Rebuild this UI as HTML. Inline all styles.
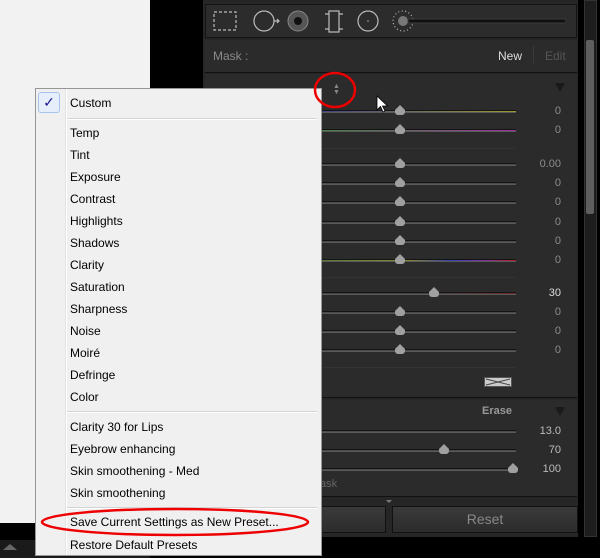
<!DOCTYPE html>
<html><head><style>
*{margin:0;padding:0;box-sizing:border-box}
body{width:600px;height:558px;background:#000;position:relative;overflow:hidden;font-family:"Liberation Sans",sans-serif}
.a{position:absolute}
.tr{position:absolute;left:300px;width:216px;height:3px;background:#4a4a4a;border-top:1px solid #141414;border-bottom:1px solid #5a5a5a}
.th{position:absolute;width:10px;height:10px;background:#a0a0a0;clip-path:polygon(50% 0,100% 50%,100% 100%,0 100%,0 50%);border-radius:3px}
.v{position:absolute;right:39px;font-size:11px;color:#8c8c8c;text-align:right}
.mi{position:absolute;left:70px;font-size:12px;color:#000}
.sep{position:absolute;left:67px;width:250px;height:2px;border-top:1px solid #d4d4d4;border-bottom:1px solid #fff}
</style></head><body>
<div class="a" style="left:0;top:0;width:150px;height:523px;background:#f2f2f2"></div>
<div class="a" style="left:0;top:540px;width:150px;height:18px;background:#1a1a1a"></div>
<div class="a" style="left:3px;top:544px;width:0;height:0;border-left:7px solid transparent;border-right:7px solid transparent;border-bottom:6px solid #666"></div>
<div class="a" style="left:203px;top:0;width:375px;height:537px;background:#262626"></div>
<div class="a" style="left:205px;top:4px;width:372px;height:34px;background:#2c2c2c;border:1px solid #141414"></div>
<svg class="a" style="left:205px;top:4px" width="372" height="34">
<g fill="none" stroke="#bbb" stroke-width="1.2">
<rect x="9" y="8" width="22" height="18" stroke-dasharray="3 2"/>
<circle cx="59" cy="17" r="10"/><path d="M69 17h5M72 15l2 2-2 2"/>
<rect x="124" y="7" width="10" height="21"/><path d="M120 10h4M120 25h4M134 10h4M134 25h4"/>
<circle cx="163" cy="17" r="10"/>
<circle cx="198" cy="17" r="10" stroke-dasharray="1 2.5"/>
</g>
<circle cx="93" cy="17" r="10" fill="#555" stroke="#888"/><circle cx="93" cy="17" r="4" fill="#111"/>
<circle cx="163" cy="17" r="0.8" fill="#aaa"/>
<circle cx="198" cy="17" r="5" fill="#777"/>
<rect x="203" y="15" width="158" height="4" rx="2" fill="#111" stroke="#3a3a3a"/>
</svg>
<div class="a" style="left:205px;top:40px;width:372px;height:33px;background:#2b2b2b;border-bottom:1px solid #111"></div>
<div class="a" style="left:213px;top:49px;font-size:12px;color:#8a8a8a">Mask :</div>
<div class="a" style="left:498px;top:49px;font-size:12px;color:#ddd">New</div>
<div class="a" style="left:533px;top:46px;width:1px;height:17px;background:#3a3a3a"></div>
<div class="a" style="left:545px;top:49px;font-size:12px;color:#555">Edit</div>
<div class="a" style="left:205px;top:74px;width:372px;height:324px;background:#2b2b2b;border-bottom:1px solid #111"></div>
<div class="a" style="left:333px;top:84px;font-size:7px;line-height:6px;color:#888">&#9650;<br>&#9660;</div>
<div class="a" style="left:555px;top:83px;width:0;height:0;border-left:5px solid transparent;border-right:5px solid transparent;border-top:9px solid #1a1a1a"></div>
<div class="a" style="left:318px;top:148px;width:198px;height:1px;background:#333"></div>
<div class="a" style="left:318px;top:277px;width:198px;height:1px;background:#333"></div>
<div class="a" style="left:318px;top:367px;width:198px;height:1px;background:#333"></div>
<div class="tr" style="top:110px;background:linear-gradient(90deg,#3a3a8a,#666 45%,#9a9a30)"></div>
<div class="tr" style="top:129px;background:linear-gradient(90deg,#3a8a3a,#666 45%,#a030a0)"></div>
<div class="tr" style="top:163px"></div><div class="tr" style="top:182px"></div><div class="tr" style="top:201px"></div>
<div class="tr" style="top:221px"></div><div class="tr" style="top:240px"></div>
<div class="tr" style="top:259px;background:linear-gradient(90deg,#4a7a3a,#8a8a30 50%,#3040b0 70%,#8030a0 85%,#b02020)"></div>
<div class="tr" style="top:292px;background:linear-gradient(90deg,#444 60%,#6a2a2a)"></div>
<div class="tr" style="top:311px"></div><div class="tr" style="top:330px"></div><div class="tr" style="top:349px"></div>
<div class="th" style="left:395px;top:105px"></div><div class="th" style="left:395px;top:124px"></div>
<div class="th" style="left:395px;top:158px"></div><div class="th" style="left:395px;top:177px"></div><div class="th" style="left:395px;top:196px"></div>
<div class="th" style="left:395px;top:216px"></div><div class="th" style="left:395px;top:235px"></div><div class="th" style="left:395px;top:254px"></div>
<div class="th" style="left:429px;top:287px"></div>
<div class="th" style="left:395px;top:306px"></div><div class="th" style="left:395px;top:325px"></div><div class="th" style="left:395px;top:344px"></div>
<div class="v" style="top:105px">0</div><div class="v" style="top:124px">0</div>
<div class="v" style="top:158px">0.00</div><div class="v" style="top:177px">0</div><div class="v" style="top:196px">0</div>
<div class="v" style="top:216px">0</div><div class="v" style="top:235px">0</div><div class="v" style="top:254px">0</div>
<div class="v" style="top:287px;color:#ddd">30</div><div class="v" style="top:306px">0</div><div class="v" style="top:325px">0</div><div class="v" style="top:344px">0</div>
<svg class="a" style="left:484px;top:377px" width="28" height="10"><rect x=".5" y=".5" width="27" height="9" fill="#ccc" stroke="#555"/><path d="M2 2l12 3 12-3M2 8l12-3 12 3" stroke="#444" fill="none"/></svg>
<div class="a" style="left:205px;top:400px;width:372px;height:97px;background:#2b2b2b;border-bottom:1px solid #111"></div>
<div class="tr" style="top:430px"></div><div class="tr" style="top:449px"></div><div class="tr" style="top:468px"></div>
<div class="th" style="left:439px;top:444px"></div><div class="th" style="left:508px;top:463px"></div>
<div class="v" style="top:425px;color:#bbb">13.0</div><div class="v" style="top:444px;color:#bbb">70</div><div class="v" style="top:463px;color:#bbb">100</div>
<div class="a" style="left:482px;top:405px;font-size:11px;font-weight:bold;color:#999">Erase</div>
<div class="a" style="left:555px;top:407px;width:0;height:0;border-left:5px solid transparent;border-right:5px solid transparent;border-top:9px solid #1a1a1a"></div>
<div class="a" style="left:320px;top:478px;font-size:11px;color:#666">ask</div>
<div class="a" style="left:386px;top:500px;width:0;height:0;border-left:3px solid transparent;border-right:3px solid transparent;border-top:3px solid #777"></div>
<div class="a" style="left:300px;top:506px;width:86px;height:27px;background:linear-gradient(#3a3a3a,#2c2c2c);border:1px solid #111"></div>
<div class="a" style="left:392px;top:506px;width:186px;height:27px;background:linear-gradient(#3a3a3a,#2c2c2c);border:1px solid #111;color:#888;font-size:14px;text-align:center;line-height:25px">Reset</div>
<div class="a" style="left:584px;top:0;width:13px;height:537px;background:#1d1d1d;border:1px solid #333"></div>
<div class="a" style="left:586px;top:40px;width:8px;height:174px;background:#5e5e5e;border-radius:2px"></div>
<div class="a" style="left:35px;top:88px;width:287px;height:468px;background:#f0f0f0;border:1px solid #979797"></div>
<div class="a" style="left:65px;top:89px;width:1px;height:466px;background:#e2e3e3"></div>
<div class="a" style="left:66px;top:89px;width:1px;height:466px;background:#fff"></div>
<div class="a" style="left:38px;top:92px;width:22px;height:21px;background:#e6eefb;border:1px solid #a8c4ea;border-radius:3px;color:#1a1a8a;font-size:14px;text-align:center;line-height:19px">&#10003;</div>
<div class="mi" style="top:96px">Custom</div>
<div class="sep" style="top:118px"></div>
<div class="mi" style="top:126px">Temp</div><div class="mi" style="top:148px">Tint</div>
<div class="mi" style="top:170px">Exposure</div><div class="mi" style="top:192px">Contrast</div>
<div class="mi" style="top:214px">Highlights</div><div class="mi" style="top:236px">Shadows</div>
<div class="mi" style="top:258px">Clarity</div><div class="mi" style="top:280px">Saturation</div>
<div class="mi" style="top:302px">Sharpness</div><div class="mi" style="top:324px">Noise</div>
<div class="mi" style="top:346px">Moiré</div><div class="mi" style="top:368px">Defringe</div>
<div class="mi" style="top:390px">Color</div>
<div class="sep" style="top:411px"></div>
<div class="mi" style="top:420px">Clarity 30 for Lips</div><div class="mi" style="top:442px">Eyebrow enhancing</div>
<div class="mi" style="top:464px">Skin smoothening - Med</div><div class="mi" style="top:486px">Skin smoothening</div>
<div class="sep" style="top:507px"></div>
<div class="mi" style="top:515px">Save Current Settings as New Preset...</div>
<div class="mi" style="top:538px">Restore Default Presets</div>
<svg class="a" style="left:0;top:0" width="600" height="558">
<ellipse cx="335" cy="90" rx="20" ry="17" fill="none" stroke="#e00" stroke-width="2.5"/>
<ellipse cx="175" cy="522" rx="133" ry="13" fill="none" stroke="#e00" stroke-width="2.5"/>
<path d="M377 96v14l3.5-3.5 2.5 5.5 2-1-2.5-5h5z" fill="#fff" stroke="#000" stroke-width=".8"/>
</svg>
</body></html>
